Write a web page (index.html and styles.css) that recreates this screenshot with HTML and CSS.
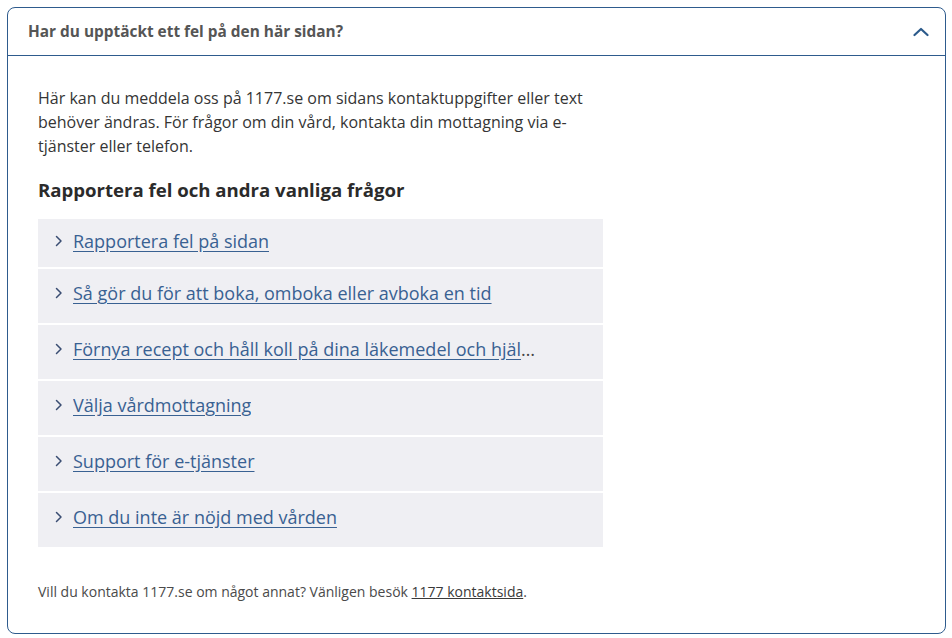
FILE: index.html
```html
<!DOCTYPE html>
<html lang="sv">
<head>
<meta charset="utf-8">
<title>Har du upptäckt ett fel på den här sidan?</title>
<link rel="stylesheet" href="styles.css">
</head>
<body>
<section class="card">
  <div class="card-head">
    <h2 class="card-title">Har du upptäckt ett fel på den här sidan?</h2>
    <svg class="chev-up" width="16" height="10" viewBox="0 0 16 10" aria-hidden="true"><path d="M1.5 8 L8 2 L14.5 8" fill="none" stroke="#2b5a8b" stroke-width="2.2" stroke-linecap="round" stroke-linejoin="round"/></svg>
  </div>
  <div class="card-body">
    <p class="intro">Här kan du meddela oss på 1177.se om sidans kontaktuppgifter eller text behöver ändras. För frågor om din vård, kontakta din mottagning via e-tjänster eller telefon.</p>
    <h3 class="sub">Rapportera fel och andra vanliga frågor</h3>
    <ul class="links">
      <li class="item item-first"><svg class="chev" width="8" height="12" viewBox="0 0 8 12"><path d="M1.5 1.5 L6 6 L1.5 10.5" fill="none" stroke="#3a4d72" stroke-width="1.5" stroke-linecap="round" stroke-linejoin="round"/></svg><div class="label"><a href="#">Rapportera fel på sidan</a></div></li>
      <li class="item"><svg class="chev" width="8" height="12" viewBox="0 0 8 12"><path d="M1.5 1.5 L6 6 L1.5 10.5" fill="none" stroke="#3a4d72" stroke-width="1.5" stroke-linecap="round" stroke-linejoin="round"/></svg><div class="label"><a href="#">Så gör du för att boka, omboka eller avboka en tid</a></div></li>
      <li class="item"><svg class="chev" width="8" height="12" viewBox="0 0 8 12"><path d="M1.5 1.5 L6 6 L1.5 10.5" fill="none" stroke="#3a4d72" stroke-width="1.5" stroke-linecap="round" stroke-linejoin="round"/></svg><div class="label"><a href="#">Förnya recept och håll koll på dina läkemedel och hjälpmedel</a></div></li>
      <li class="item"><svg class="chev" width="8" height="12" viewBox="0 0 8 12"><path d="M1.5 1.5 L6 6 L1.5 10.5" fill="none" stroke="#3a4d72" stroke-width="1.5" stroke-linecap="round" stroke-linejoin="round"/></svg><div class="label"><a href="#">Välja vårdmottagning</a></div></li>
      <li class="item"><svg class="chev" width="8" height="12" viewBox="0 0 8 12"><path d="M1.5 1.5 L6 6 L1.5 10.5" fill="none" stroke="#3a4d72" stroke-width="1.5" stroke-linecap="round" stroke-linejoin="round"/></svg><div class="label"><a href="#">Support för e-tjänster</a></div></li>
      <li class="item"><svg class="chev" width="8" height="12" viewBox="0 0 8 12"><path d="M1.5 1.5 L6 6 L1.5 10.5" fill="none" stroke="#3a4d72" stroke-width="1.5" stroke-linecap="round" stroke-linejoin="round"/></svg><div class="label"><a href="#">Om du inte är nöjd med vården</a></div></li>
    </ul>
    <p class="foot">Vill du kontakta 1177.se om något annat? Vänligen besök <a href="#">1177 kontaktsida</a>.</p>
  </div>
</section>
</body>
</html>
```
FILE: styles.css
```css
* { box-sizing: border-box; }
html, body { margin: 0; padding: 0; background: #ffffff; }
body {
  padding: 7px 6px 5px 7px;
  font-family: "Open Sans", "Liberation Sans", sans-serif;
  color: #353535;
}
.card {
  border: 1px solid #2e5b8d;
  border-radius: 8px;
  height: 627px;
  display: flex;
  flex-direction: column;
}
.card-head {
  height: 48px;
  border-bottom: 1px solid #2e5b8d;
  display: flex;
  align-items: center;
  justify-content: space-between;
  padding: 0 16px 0 20px;
}
.card-title {
  margin: 0;
  font-size: 15.4px;
  font-weight: 700;
  color: #555555;
}
.chev-up { display: block; }
.card-body {
  padding: 30px 30px 0 30px;
}
.intro {
  margin: 0;
  max-width: 565px;
  font-size: 16px;
  line-height: 24px;
  color: #353535;
}
.sub {
  margin: 18px 0 15px;
  font-size: 18.6px;
  line-height: 28px;
  font-weight: 700;
  color: #2b2b2b;
}
.links {
  list-style: none;
  margin: 0;
  padding: 0;
  width: 565px;
  display: flex;
  flex-direction: column;
  gap: 2px;
}
.item {
  background: #efeff3;
  height: 54px;
  display: flex;
  align-items: center;
  padding: 0 60px 6px 17px;
  gap: 10px;
}
.item-first { height: 48px; padding-bottom: 4px; }
.chev { flex: none; }
.label {
  min-width: 0;
  white-space: nowrap;
  overflow: hidden;
  text-overflow: ellipsis;
  font-size: 18px;
  line-height: 26px;
  color: #444;
}
.label a {
  color: #396192;
  text-decoration: underline;
  text-underline-offset: 3px;
}
.foot {
  margin: 34px 0 0;
  font-size: 14px;
  line-height: 21px;
  color: #4a4a4a;
}
.foot a { color: #3a3a3a; text-decoration: underline; }
```
